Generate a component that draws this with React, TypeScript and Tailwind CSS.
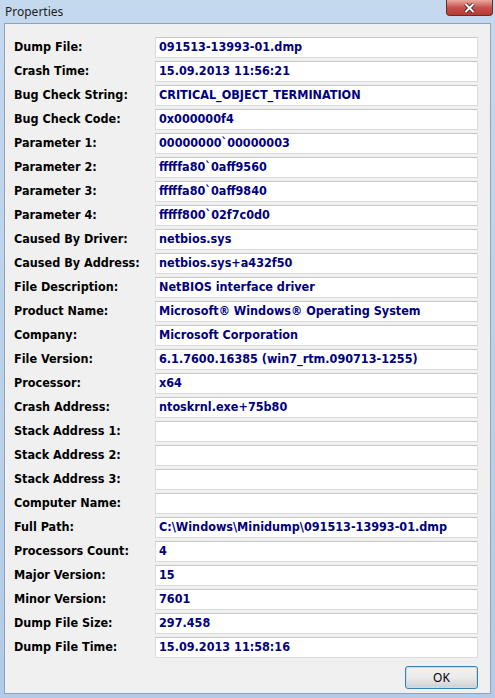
const rows: [string, string][] = [
  ["Dump File:", "091513-13993-01.dmp"],
  ["Crash Time:", "15.09.2013 11:56:21"],
  ["Bug Check String:", "CRITICAL_OBJECT_TERMINATION"],
  ["Bug Check Code:", "0x000000f4"],
  ["Parameter 1:", "00000000`00000003"],
  ["Parameter 2:", "fffffa80`0aff9560"],
  ["Parameter 3:", "fffffa80`0aff9840"],
  ["Parameter 4:", "fffff800`02f7c0d0"],
  ["Caused By Driver:", "netbios.sys"],
  ["Caused By Address:", "netbios.sys+a432f50"],
  ["File Description:", "NetBIOS interface driver"],
  ["Product Name:", "Microsoft® Windows® Operating System"],
  ["Company:", "Microsoft Corporation"],
  ["File Version:", "6.1.7600.16385 (win7_rtm.090713-1255)"],
  ["Processor:", "x64"],
  ["Crash Address:", "ntoskrnl.exe+75b80"],
  ["Stack Address 1:", ""],
  ["Stack Address 2:", ""],
  ["Stack Address 3:", ""],
  ["Computer Name:", ""],
  ["Full Path:", "C:\\Windows\\Minidump\\091513-13993-01.dmp"],
  ["Processors Count:", "4"],
  ["Major Version:", "15"],
  ["Minor Version:", "7601"],
  ["Dump File Size:", "297.458"],
  ["Dump File Time:", "15.09.2013 11:58:16"],
];

export default function App() {
  return (
    <div className="w-[495px] h-[698px] flex flex-col bg-gradient-to-b from-[#c4d8ee] to-[#b3cbe6] font-['DejaVu_Sans_Condensed','DejaVu_Sans',sans-serif]">
      {/* Title bar */}
      <div className="h-[23px] flex items-start justify-between shrink-0">
        <span className="pl-[5px] pt-[3px] text-[12px] text-[#1e1e1e] font-['Noto_Sans','Open_Sans',sans-serif]">
          Properties
        </span>
        <button className="mr-[2px] w-[47px] h-[16px] rounded-b-[4px] border border-[#6e2a24] border-t-0 bg-gradient-to-b from-[#e9a99c] via-[#c75050] to-[#b73a2c] flex items-center justify-center">
          <svg width="11" height="10" viewBox="0 0 11 10">
            <path d="M1.5 1 L9.5 9 M9.5 1 L1.5 9" stroke="#3b1612" strokeWidth="3.6" />
            <path d="M1.5 1 L9.5 9 M9.5 1 L1.5 9" stroke="#ffffff" strokeWidth="2" />
          </svg>
        </button>
      </div>

      {/* Client area */}
      <div className="flex-1 mx-[4px] mb-[4px] border border-[#8ea4be] bg-[#f0f0f0] flex flex-col pl-[9px] pr-[12px] pt-[13px]">
        <div className="flex flex-col gap-[3px]">
          {rows.map(([label, value]) => (
            <div key={label} className="flex items-center h-[21px]">
              <span className="w-[141px] text-[12.5px] font-bold text-black whitespace-nowrap">{label}</span>
              <div className="flex-1 h-[21px] bg-white border border-[#dcdcdc] border-t-[#c8c8c8] pl-[3px] flex items-center text-[12.5px] font-bold text-[#000080] whitespace-nowrap overflow-hidden">
                {value}
              </div>
            </div>
          ))}
        </div>
        <div className="flex justify-end mt-[8px]">
          <button className="w-[73px] h-[23px] rounded-[3px] border border-[#3c7fb1] bg-gradient-to-b from-[#f2f2f2] via-[#ebebeb] to-[#cfcfcf] shadow-[inset_0_0_0_1px_#b7e3f8] text-[12px] text-black font-['Noto_Sans','Open_Sans',sans-serif]">
            OK
          </button>
        </div>
      </div>
    </div>
  );
}
